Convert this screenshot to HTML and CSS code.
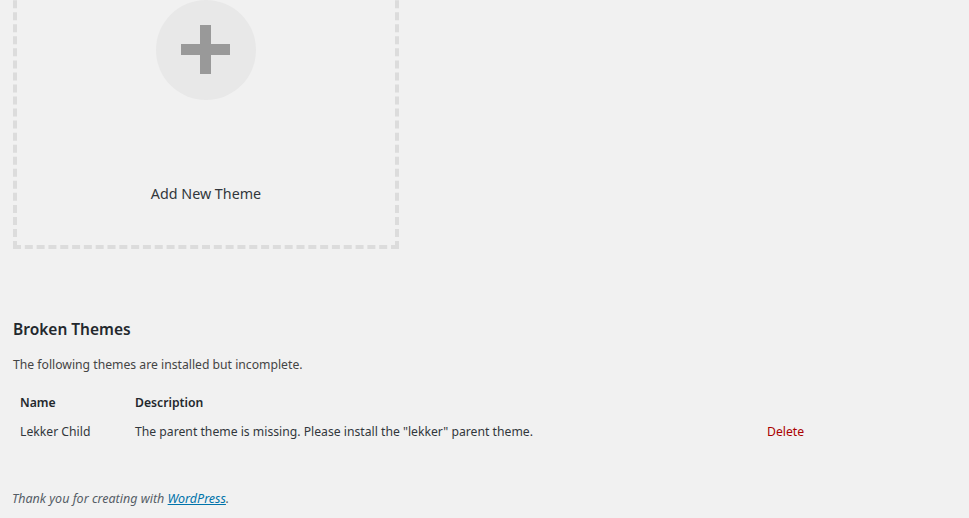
FILE: index.html
```html
<!DOCTYPE html>
<html>
<head>
<meta charset="utf-8">
<link rel="stylesheet" href="styles.css">
</head>
<body>
<div class="wrap">
  <div class="add-card">
    <div class="plus-circle">
      <svg width="50" height="50" viewBox="0 0 50 50"><rect x="19" y="0" width="11" height="49" fill="#999"/><rect x="0" y="19" width="49" height="11" fill="#999"/></svg>
    </div>
    <div class="add-name">Add New Theme</div>
  </div>

  <h2 class="broken-title">Broken Themes</h2>
  <p class="broken-desc">The following themes are installed but incomplete.</p>
  <table class="broken-table">
    <tr>
      <th class="c-name">Name</th>
      <th class="c-desc">Description</th>
      <th class="c-act"></th>
    </tr>
    <tr>
      <td class="c-name">Lekker Child</td>
      <td class="c-desc">The parent theme is missing. Please install the "lekker" parent theme.</td>
      <td class="c-act"><a class="delete" href="#">Delete</a></td>
    </tr>
  </table>
</div>
<div class="footer">
  <span class="thanks">Thank you for creating with <a href="#">WordPress</a>.</span>
</div>
</body>
</html>
```
FILE: styles.css
```css
html, body {
  margin: 0;
  padding: 0;
  background: #f1f1f1;
}
body {
  font-family: "Noto Sans", "Open Sans", sans-serif;
  font-size: 13px;
  color: #444;
  overflow: hidden;
  height: 518px;
}
.wrap {
  padding-left: 13px;
}
.add-card {
  box-sizing: border-box;
  width: 386px;
  height: 309px;
  margin-top: -60px;
  border: 4px dashed #dcdcdc;
  display: flex;
  flex-direction: column;
  align-items: center;
  padding-top: 56px;
}
.plus-circle {
  width: 100px;
  height: 100px;
  border-radius: 50%;
  background: #e8e8e8;
  display: flex;
  align-items: center;
  justify-content: center;
}
.add-name {
  margin-top: 84px;
  font-size: 14.3px;
  color: #32373c;
  line-height: 20px;
}
.broken-title {
  margin: 69px 0 0;
  font-size: 15.5px;
  font-weight: 600;
  line-height: 23px;
  color: #23282d;
}
.broken-desc {
  margin: 14px 0 0;
  font-size: 12.2px;
  line-height: 19px;
  color: #444;
}
.broken-table {
  border-collapse: collapse;
  margin-top: 14px;
  width: 950px;
  color: #32373c;
  font-size: 12.2px;
}
.broken-table th {
  text-align: left;
  font-weight: 600;
  padding: 0 7px;
  height: 29px;
  line-height: 19px;
  color: #23282d;
}
.broken-table td {
  padding: 0 7px;
  height: 29px;
  line-height: 19px;
}
.c-name { width: 101px; }
.c-desc { width: 618px; }
.delete {
  color: #a00;
  text-decoration: none;
}
.footer {
  padding: 0 12px;
  margin-top: 43px;
}
.thanks {
  font-style: italic;
  color: #555d66;
  font-size: 12.5px;
  line-height: 19px;
}
.thanks a {
  color: #0073aa;
  text-decoration: underline;
}
```
